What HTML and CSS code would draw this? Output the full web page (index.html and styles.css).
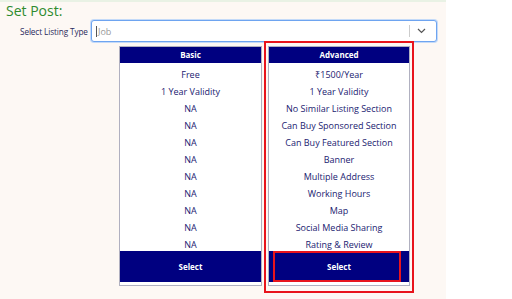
FILE: index.html
```html
<!DOCTYPE html>
<html lang="en">
<head>
  <meta charset="UTF-8">
  <title>Set Post</title>
  <link rel="stylesheet" href="styles.css">
</head>
<body>
  <div class="page">
    <h2 class="title">Set Post:</h2>
    <div class="form-row">
      <label class="field-label">Select Listing Type</label>
      <div class="select-box">
        <span class="placeholder">Job</span>
        <span class="sep"></span>
        <svg class="chevron" width="9" height="6" viewBox="0 0 9 6"><path d="M1 1l3.5 3.5L8 1" fill="none" stroke="#555" stroke-width="1.2"/></svg>
      </div>
    </div>
    <div class="plans">
      <div class="plan">
        <div class="plan-head">Basic</div>
        <ul class="plan-rows">
          <li>Free</li>
          <li>1 Year Validity</li>
          <li>NA</li>
          <li>NA</li>
          <li>NA</li>
          <li>NA</li>
          <li>NA</li>
          <li>NA</li>
          <li>NA</li>
          <li>NA</li>
          <li>NA</li>
        </ul>
        <div class="plan-btn">Select</div>
      </div>
      <div class="highlight">
        <div class="plan">
          <div class="plan-head">Advanced</div>
          <ul class="plan-rows">
            <li>₹1500/Year</li>
            <li>1 Year Validity</li>
            <li>No Similar Listing Section</li>
            <li>Can Buy Sponsored Section</li>
            <li>Can Buy Featured Section</li>
            <li>Banner</li>
            <li>Multiple Address</li>
            <li>Working Hours</li>
            <li>Map</li>
            <li>Social Media Sharing</li>
            <li>Rating &amp; Review</li>
          </ul>
          <div class="plan-btn marked">Select<span class="mark"></span></div>
        </div>
      </div>
    </div>
  </div>
</body>
</html>
```

FILE: styles.css
```css
body { margin: 0; background: #fff; font-family: "Open Sans", "Noto Sans", sans-serif; }
.page { width: 446px; height: 297px; background: #fdf8f4; border-top: 2px solid #e9f2e5; }
.title { margin: 0; padding: 1px 0 0 6px; font-size: 14px; font-weight: normal; line-height: 16px; color: #2e8b2e; }
.form-row { display: flex; align-items: center; margin-top: 1px; padding-left: 20px; }
.field-label { flex: none; width: 71px; white-space: nowrap; font-size: 8.2px; letter-spacing: -0.1px; color: #2a2a5c; }
.select-box { flex: none; display: flex; align-items: center; width: 344px; height: 20px; border: 1px solid #6ea4f0; border-radius: 3px; background: #fff; box-shadow: 0 0 0 1px #c4daf8; }
.placeholder { flex: 1; font-size: 9px; color: #999; border-left: 1px solid #555; margin-left: 4px; padding-left: 1px; line-height: 11px; }
.sep { width: 1px; height: 12px; background: #ccc; margin-right: 7px; }
.chevron { margin-right: 10px; }
.plans { display: flex; align-items: flex-start; margin-top: 4px; padding-left: 119px; }
.plan { width: 141px; border: 1px solid #b0b0c0; background: #fff; padding-bottom: 3px; }
.plan-head { height: 16px; line-height: 16px; background: #000080; color: #fff; font-size: 8px; font-weight: bold; text-align: center; }
.plan-rows { list-style: none; margin: 0; padding: 3px 0 0; }
.plan-rows li { height: 17px; line-height: 17px; text-align: center; font-size: 9px; color: #1a1a70; }
.plan-btn { position: relative; height: 31px; line-height: 31px; margin-top: -2px; background: #000080; color: #fff; font-size: 8px; font-weight: bold; text-align: center; }
.highlight { margin-left: 2px; margin-top: -5px; padding: 3px 2px 5px; border: 2px solid #e8141c; }
.highlight .plan { width: 140px; }
.mark { position: absolute; left: 4px; right: 8px; top: 0; bottom: 0; border: 2px solid #e8141c; }
```
